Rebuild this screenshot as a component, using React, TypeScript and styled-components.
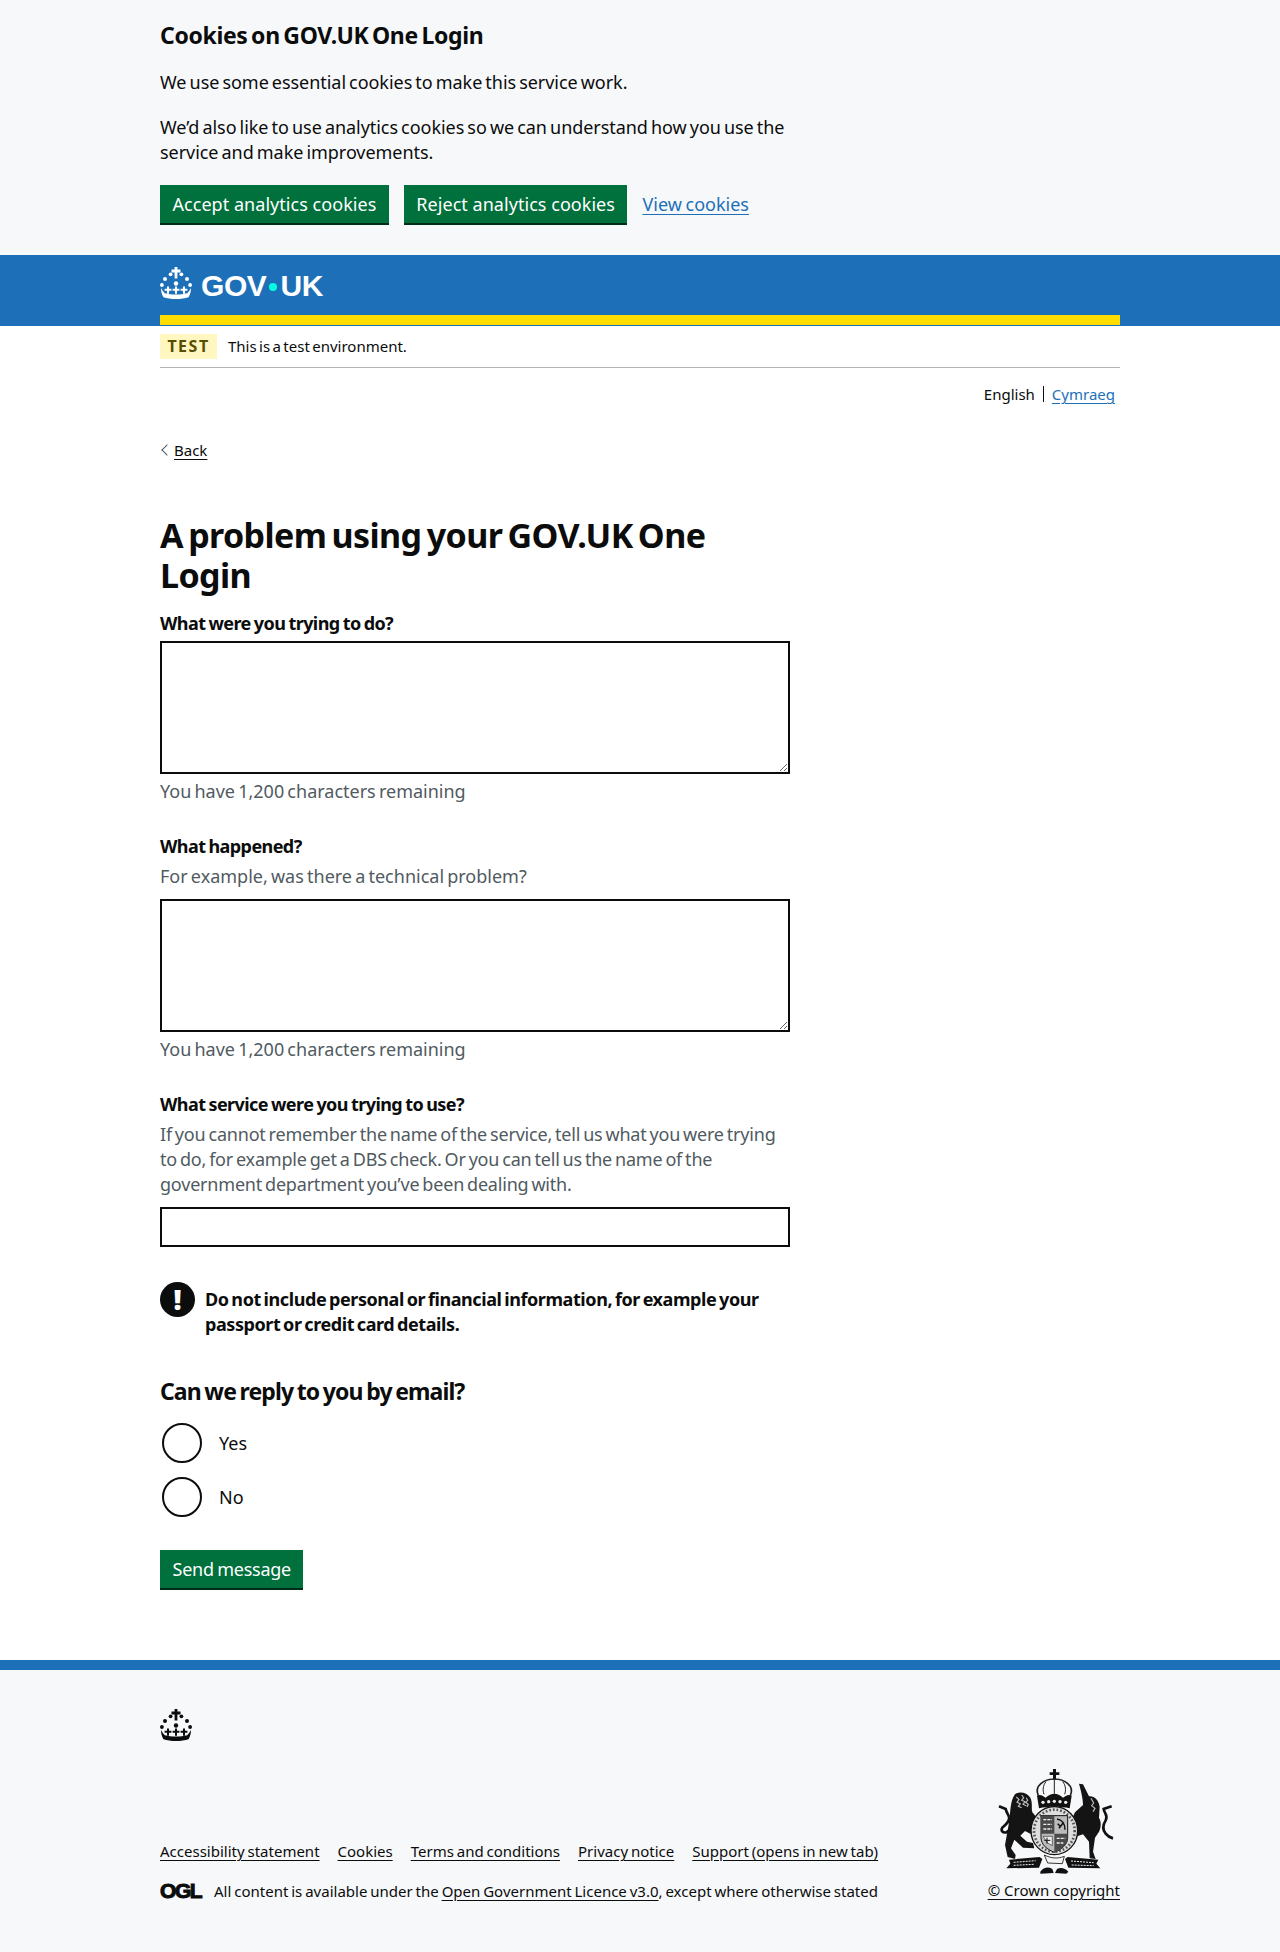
import React from 'react';
import styled, { createGlobalStyle } from 'styled-components';

const FONT = '"Noto Sans", Arial, sans-serif';
const BLACK = '#0b0c0c';
const BLUE = '#1d70b8';
const GREY = '#505a5f';
const PALE = '#f7f8fa';

const GlobalStyle = createGlobalStyle`
	html, body {
		margin: 0;
		padding: 0;
		background: #fff;
		color: ${BLACK};
		font-family: ${FONT};
	}
	* {
		box-sizing: border-box;
	}
`;

const miniCross = (x: number, y: number) =>
	`M${x - 1} ${y - 3.4}h2v2.2h2.4v2h-2.4v3h-2v-3h-2.400v-2h2.400z`;

const Crown = ({ color }: { color: string }) => (
	<CrownSvg viewBox="0 0 32 32" fill={color} aria-hidden="true">
		<path d="M14.600 0h2.800v2.600h3.100v2.800h-3.100v6h-2.800v-6h-3.100V2.600h3.100z" />
		<circle cx="10.600" cy="7.300" r="1.900" />
		<circle cx="21.400" cy="7.300" r="1.900" />
		<circle cx="5" cy="12" r="2" />
		<circle cx="27" cy="12" r="2" />
		<circle cx="16" cy="16.500" r="2.200" />
		<circle cx="1.900" cy="18" r="1.900" />
		<circle cx="30.100" cy="18" r="1.900" />
		<path d={miniCross(8, 23)} />
		<path d={miniCross(16, 23)} />
		<path d={miniCross(24, 23)} />
		<path d="M1 21c1.300 2.300 2.300 3.800 3.800 5.200 3 .9 7.200 1.300 11.200 1.300s8.200-.4 11.200-1.300c1.500-1.400 2.500-2.900 3.800-5.200 0 3.800-.9 6.800-2.500 9.200-3.300 1.200-8 1.800-12.500 1.800S6.800 31.400 3.500 30.200C1.900 27.800 1 24.800 1 21z" />
	</CrownSvg>
);

const Crest = () => (
	<CrestSvg viewBox="0 0 375 330" aria-hidden="true">
		{/* crown */}
		<path d="M186 12h9v10h10v8h-10v14h-9V30h-10v-8h10z" fill="#111" />
		<path d="M142 92c-14-30 18-50 48-50s62 20 48 50" fill="none" stroke="#222" strokeWidth="5" />
		<path d="M190 44v42M165 50c-10 12-10 26-6 38M215 50c10 12 10 26 6 38" fill="none" stroke="#222" strokeWidth="3" />
		<path d="M138 92c10-6 20 2 26 6 8-8 18-12 26-12s18 4 26 12c6-4 16-12 26-6l-6 38c-28-6-64-6-92 0z" fill="#111" />
		<g fill="#eee">
			<circle cx="156" cy="112" r="5" />
			<circle cx="173" cy="110" r="5" />
			<circle cx="190" cy="109" r="5" />
			<circle cx="207" cy="110" r="5" />
			<circle cx="224" cy="112" r="5" />
		</g>
		{/* lion */}
		<path d="M72 88c12-10 36-6 46 10 8 16 2 32 6 44l20 24-8 36-18 4-16-8-14 14 20 18 18 4 4 16-34-2-26-24-10 26 14 20-2 12-22-6-8-36 8-44 6-34C58 130 60 104 72 88z" fill="#141414" />
		<path d="M76 96l8 8-6 8 10 4-6 8 10 4M92 90l6 8-6 8 10 4-6 8 10 4M106 98l4 8-6 6 8 6-4 8" stroke="#bbb" strokeWidth="3.500" fill="none" />
		<path d="M24 124l20 8c2 10 8 16 10 24 4 14-10 22-20 32-6 10 2 16 12 14l14-10" fill="none" stroke="#111" strokeWidth="8" />
		{/* unicorn */}
		<path d="M276 58l18 36c16-2 30 12 32 32l-2 32c8 14 6 30 0 42l-12 18-6 42 8 22-18-2-2-50-18-22-24 8-8-8 8-26-14-10 14-30 24-22c0-12-2-28-12-64z" fill="#141414" />
		<path d="M300 100l8 14-6 8 10 8-6 10" stroke="#bbb" strokeWidth="3.500" fill="none" />
		<path d="M362 124l-24 8c2 14 14 18 6 34-10 16-10 28 0 40 6 8 14 12 22 14" fill="none" stroke="#111" strokeWidth="8" />
		{/* shield and garter */}
		<ellipse cx="190" cy="197" rx="70" ry="72" fill="#ddd" stroke="#111" strokeWidth="4" />
		<ellipse cx="190" cy="197" rx="61" ry="63" fill="none" stroke="#555" strokeWidth="8" strokeDasharray="5 6" />
		<path d="M150 152h80v66c0 22-20 36-40 44-20-8-40-22-40-44z" fill="#bbb" stroke="#111" strokeWidth="3" />
		<path d="M150 152h40v54h-40zM190 206h40v12c0 22-20 36-40 44z" fill="#4a4a4a" />
		<path d="M157 164h26M157 178h26M157 192h26M197 220h26M197 234h20" stroke="#eee" strokeWidth="4" strokeDasharray="9 3" />
		<path d="M198 162c14 2 24 14 24 32M204 190l14-18M200 176l10 10" stroke="#111" strokeWidth="4.500" fill="none" />
		<path d="M156 214h28v28l-14-8z" fill="#eee" stroke="#333" strokeWidth="2" />
		<path d="M168 218v18M160 226h18" stroke="#111" strokeWidth="3" />
		{/* motto */}
		<path d="M54 284l92-8 8 6-10 26-98 2 12-14z" fill="#111" />
		<path d="M68 292l66-5M68 301l60-3" stroke="#eee" strokeWidth="3" strokeDasharray="6 3" />
		<path d="M322 284l-92-8-8 6 10 26 96 2-12-14z" fill="#111" />
		<path d="M240 288l68 5M242 300l66 2" stroke="#eee" strokeWidth="3" strokeDasharray="6 3" />
		<path d="M160 270c20 10 40 12 60 4l-6 22-44-2z" fill="#f4f4f4" stroke="#111" strokeWidth="2.500" />
		<path d="M148 320c10-12 22-16 36-8l4 12-40 2zM192 324l6-12c10-6 24-4 34 8l-6 6z" fill="#111" />
	</CrestSvg>
);

const App = () => (
	<>
		<GlobalStyle />
		<CookieBanner>
			<Container>
				<CookieBody>
					<CookieTitle>Cookies on GOV.UK One Login</CookieTitle>
					<BodyText>We use some essential cookies to make this service work.</BodyText>
					<BodyText>
						We’d also like to use analytics cookies so we can understand how you use the service and make
						improvements.
					</BodyText>
					<CookieActions>
						<CookieButton type="button">Accept analytics cookies</CookieButton>
						<CookieButton type="button">Reject analytics cookies</CookieButton>
						<CookieLink href="#">View cookies</CookieLink>
					</CookieActions>
				</CookieBody>
			</Container>
		</CookieBanner>

		<Header>
			<HeaderInner>
				<Logo>
					<Crown color="#fff" />
					<LogoText>
						GOV<LogoDot />UK
					</LogoText>
				</Logo>
			</HeaderInner>
		</Header>

		<Container>
			<PhaseBanner>
				<PhaseTag>TEST</PhaseTag>
				<PhaseText>This is a test environment.</PhaseText>
			</PhaseBanner>
			<LanguageBar>
				<span>English</span>
				<LanguageDivider />
				<BlueLink href="#">Cymraeg</BlueLink>
			</LanguageBar>
			<BackLink href="#">Back</BackLink>

			<Main>
				<Heading>A problem using your GOV.UK One Login</Heading>
				<form>
					<FormGroup>
						<Label htmlFor="trying">What were you trying to do?</Label>
						<TextArea id="trying" rows={5} />
						<Hint>You have 1,200 characters remaining</Hint>
					</FormGroup>
					<FormGroup>
						<Label htmlFor="happened">What happened?</Label>
						<Hint $above>For example, was there a technical problem?</Hint>
						<TextArea id="happened" rows={5} />
						<Hint>You have 1,200 characters remaining</Hint>
					</FormGroup>
					<FormGroup>
						<Label htmlFor="service">What service were you trying to use?</Label>
						<LongHint $above>
							If you cannot remember the name of the service, tell us what you were trying to do, for example
							get a DBS check. Or you can tell us the name of the government department you’ve been dealing
							with.
						</LongHint>
						<TextInput id="service" type="text" />
					</FormGroup>
					<Warning>
						<WarningIcon aria-hidden="true">!</WarningIcon>
						<WarningText>
							Do not include personal or financial information, for example your passport or credit card
							details.
						</WarningText>
					</Warning>
					<Fieldset>
						<Legend>Can we reply to you by email?</Legend>
						<RadioRow>
							<Radio type="radio" name="reply" id="reply-yes" />
							<RadioLabel htmlFor="reply-yes">Yes</RadioLabel>
						</RadioRow>
						<RadioRow>
							<Radio type="radio" name="reply" id="reply-no" />
							<RadioLabel htmlFor="reply-no">No</RadioLabel>
						</RadioRow>
					</Fieldset>
					<SendButton type="button">Send message</SendButton>
				</form>
			</Main>
		</Container>

		<Footer>
			<FooterInner>
				<FooterLeft>
					<Crown color={BLACK} />
					<div>
						<FooterLinks>
							<FooterLink href="#">Accessibility statement</FooterLink>
							<FooterLink href="#">Cookies</FooterLink>
							<FooterLink href="#">Terms and conditions</FooterLink>
							<FooterLink href="#">Privacy notice</FooterLink>
							<FooterLink href="#">Support (opens in new tab)</FooterLink>
						</FooterLinks>
						<Licence>
							<OglMark>OGL</OglMark>
							<span>
								All content is available under the <FooterLink href="#">Open Government Licence v3.0</FooterLink>,
								except where otherwise stated
							</span>
						</Licence>
					</div>
				</FooterLeft>
				<FooterRight>
					<Crest />
					<CopyrightLink href="#">© Crown copyright</CopyrightLink>
				</FooterRight>
			</FooterInner>
		</Footer>
	</>
);

const Container = styled.div`
	width: 960px;
	margin: 0 auto;
`;

const CookieBanner = styled.div`
	background: ${PALE};
	padding: 20px 0 30px;
`;

const CookieBody = styled.div`
	width: 630px;
`;

const CookieTitle = styled.h2`
	margin: 0 0 20px;
	font-size: 23px;
	line-height: 30px;
	font-weight: 700;
	letter-spacing: -0.35px;
	word-spacing: -2px;
`;

const BodyText = styled.p`
	margin: 0 0 20px;
	font-size: 18px;
	line-height: 25px;
	letter-spacing: -0.05px;
	word-spacing: -1.5px;
`;

const CookieActions = styled.div`
	display: flex;
	align-items: center;
	gap: 15px;
	font-size: 18px;
	word-spacing: -1px;
`;

const Button = styled.button`
	height: 40px;
	padding: 0 12.5px;
	border: 0;
	border-bottom: 2px solid #002d18;
	border-radius: 0;
	background: #00703c;
	color: #fff;
	font-family: ${FONT};
	font-size: 18px;
	line-height: 25px;
	white-space: nowrap;
`;

const CookieButton = styled(Button)`
	word-spacing: 0;
	letter-spacing: 0.04px;
`;

const SendButton = styled(Button)`
	word-spacing: -1px;
	letter-spacing: -0.25px;
`;

const BlueLink = styled.a`
	color: ${BLUE};
	text-decoration: underline;
	text-underline-offset: 3px;
`;

const CookieLink = styled(BlueLink)`
	margin-bottom: 2px;
`;

const Header = styled.header`
	background: ${BLUE};
	height: 71px;
`;

const HeaderInner = styled(Container)`
	height: 70px;
	border-bottom: 10px solid #ffdd00;
	padding-top: 12px;
`;

const Logo = styled.div`
	display: flex;
	align-items: flex-start;
	gap: 9px;
`;

const CrownSvg = styled.svg`
	display: block;
	width: 32px;
	height: 32px;
`;

const LogoText = styled.span`
	display: flex;
	align-items: center;
	padding-top: 1px;
	color: #fff;
	font-family: 'Liberation Sans', Arial, sans-serif;
	font-weight: 700;
	font-size: 30px;
	line-height: 36px;
	letter-spacing: -0.4px;
`;

const LogoDot = styled.i`
	width: 8px;
	height: 8px;
	margin: 2px 3px 0;
	border-radius: 50%;
	background: #00ffe0;
`;

const PhaseBanner = styled.div`
	display: flex;
	align-items: center;
	gap: 11px;
	height: 42px;
	border-bottom: 1px solid #b1b4b6;
	padding-bottom: 1px;
`;

const PhaseTag = styled.strong`
	display: block;
	width: 57px;
	height: 25px;
	background: #fff7bf;
	color: #594d00;
	font-size: 16px;
	line-height: 25px;
	font-weight: 700;
	letter-spacing: 1.5px;
	text-align: center;
`;

const PhaseText = styled.span`
	font-size: 15px;
	word-spacing: -1.5px;
`;

const LanguageBar = styled.div`
	display: flex;
	justify-content: flex-end;
	align-items: center;
	height: 22px;
	margin-top: 15px;
	padding-right: 5px;
	font-size: 15px;
`;

const LanguageDivider = styled.span`
	width: 1px;
	height: 16px;
	margin: 0 8px;
	background: ${BLACK};
`;

const BackLink = styled.a`
	display: inline-block;
	position: relative;
	margin-top: 35px;
	padding-left: 14px;
	color: ${BLACK};
	font-size: 15px;
	line-height: 20px;
	text-underline-offset: 3px;

	&::before {
		content: '';
		position: absolute;
		left: 3px;
		top: 6px;
		width: 7px;
		height: 7px;
		border-left: 1px solid ${GREY};
		border-bottom: 1px solid ${GREY};
		transform: rotate(45deg);
	}
`;

const Main = styled.main`
	width: 630px;
	padding: 54px 0 70px;
`;

const Heading = styled.h1`
	margin: 0 0 16px;
	font-size: 34px;
	line-height: 40px;
	font-weight: 700;
	letter-spacing: -0.6px;
	word-spacing: -3px;
`;

const FormGroup = styled.div`
	margin-bottom: 30px;
`;

const Label = styled.label`
	display: block;
	margin-bottom: 5px;
	font-size: 18px;
	line-height: 25px;
	font-weight: 700;
	letter-spacing: -0.58px;
	word-spacing: -1px;
`;

const Hint = styled.div<{ $above?: boolean }>`
	margin: ${(p) => (p.$above ? '5px 0 10px' : '5px 0 0')};
	color: ${GREY};
	font-size: 18px;
	line-height: 25px;
	word-spacing: -1.5px;
`;

const LongHint = styled(Hint)`
	letter-spacing: -0.2px;
`;

const TextArea = styled.textarea`
	display: block;
	width: 100%;
	height: 133px;
	padding: 5px;
	border: 2px solid ${BLACK};
	border-radius: 0;
	font-family: ${FONT};
	font-size: 18px;
	line-height: 25px;
`;

const TextInput = styled.input`
	display: block;
	width: 100%;
	height: 40px;
	padding: 5px;
	border: 2px solid ${BLACK};
	border-radius: 0;
	font-family: ${FONT};
	font-size: 18px;
`;

const Warning = styled.div`
	display: flex;
	gap: 10px;
	margin-top: 35px;
	margin-bottom: 39px;
`;

const WarningIcon = styled.span`
	flex: none;
	width: 35px;
	height: 35px;
	border-radius: 50%;
	background: ${BLACK};
	color: #fff;
	font-size: 28px;
	font-weight: 900;
	line-height: 35px;
	text-align: center;
`;

const WarningText = styled.strong`
	padding-top: 5px;
	font-size: 18px;
	line-height: 25px;
	font-weight: 700;
	letter-spacing: -0.42px;
	word-spacing: -1.5px;
`;

const Fieldset = styled.fieldset`
	margin: 0 0 21px;
	padding: 0;
	border: 0;
`;

const Legend = styled.legend`
	padding: 0;
	margin-bottom: 15px;
	font-size: 23px;
	line-height: 30px;
	font-weight: 700;
	letter-spacing: -0.9px;
	word-spacing: -1.5px;
`;

const RadioRow = styled.div`
	display: flex;
	align-items: center;
	height: 44px;
	margin-bottom: 10px;
`;

const Radio = styled.input`
	appearance: none;
	width: 40px;
	height: 40px;
	margin: 0 0 0 2px;
	border: 2px solid ${BLACK};
	border-radius: 50%;
	background: #fff;
`;

const RadioLabel = styled.label`
	padding-left: 17px;
	font-size: 18px;
	line-height: 25px;
`;

const Footer = styled.footer`
	height: 292px;
	border-top: 10px solid ${BLUE};
	background: ${PALE};
`;

const FooterInner = styled(Container)`
	display: flex;
	justify-content: space-between;
	padding-top: 39px;
	font-size: 15px;
	line-height: 20px;
	word-spacing: -1px;
`;

const FooterLeft = styled.div`
	display: flex;
	flex-direction: column;
	justify-content: space-between;
	height: 192px;
`;

const FooterLinks = styled.div`
	display: flex;
	gap: 18px;
	margin-bottom: 20px;
`;

const FooterLink = styled.a`
	color: ${BLACK};
	text-underline-offset: 3px;
`;

const CopyrightLink = styled(FooterLink)`
	word-spacing: 0;
`;

const Licence = styled.div`
	display: flex;
	align-items: center;
	gap: 13px;
`;

const OglMark = styled.span`
	width: 41px;
	font-family: 'Liberation Sans', Arial, sans-serif;
	font-size: 21px;
	line-height: 20px;
	font-weight: 700;
	letter-spacing: -1.4px;
	-webkit-text-stroke: 1px ${BLACK};
`;

const FooterRight = styled.div`
	display: flex;
	flex-direction: column;
	align-items: center;
	gap: 5px;
	padding-top: 56px;
`;

const CrestSvg = styled.svg`
	display: block;
	width: 125px;
	height: 110px;
`;

export default App;
